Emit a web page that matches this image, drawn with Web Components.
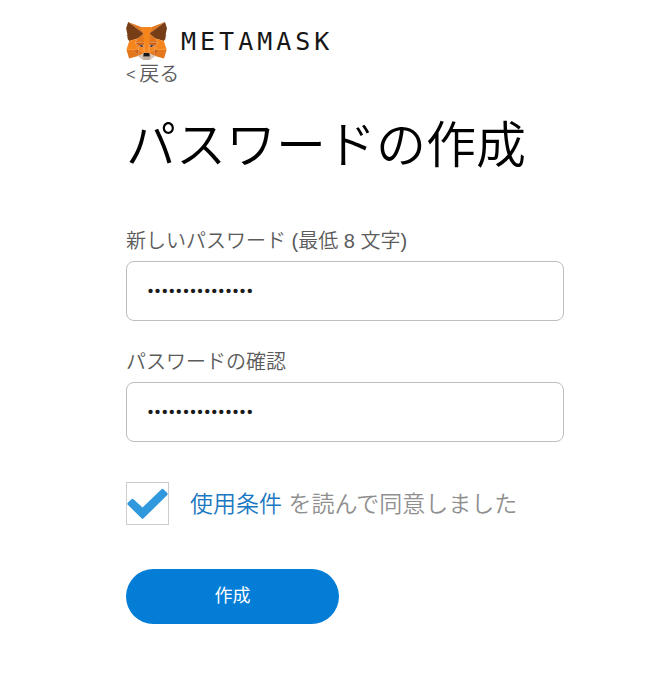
<!DOCTYPE html>
<html lang="ja">
<head>
<meta charset="utf-8">
<meta name="viewport" content="width=device-width, initial-scale=1">
<title>MetaMask</title>
<style>
    body {
        margin: 0;
        background: #fff;
        color: #5b5b5b;
        font-family: "Liberation Sans", "Noto Sans CJK JP", sans-serif;
        font-size: 20px;
        font-weight: 350;
        line-height: 24px;
    }
</style>
</head>
<body>
<create-password></create-password>

<script>
class BrandLogo extends HTMLElement {
    constructor() {
        super();
        this.attachShadow({ mode: 'open' });
        this.shadowRoot.innerHTML = `
        <style>
            :host {
                display: flex;
                align-items: center;
                gap: 14px;
                height: 38px;
                color: #161616;
                font: 25px "DejaVu Sans Mono", monospace;
                letter-spacing: 4px;
            }
            svg {
                flex: none;
                width: 41px;
                height: 38px;
            }
        </style>
        <svg viewBox="31 35 256 237" aria-hidden="true">
            <g fill="#e4761b">
                <path d="M274 35.500 174.600 109.400 193 65.800zM44.400 35.500 143.100 110.100 125.600 65.800z"/>
                <path d="M238.300 206.800 211.800 247.400 268.500 263 284.800 207.700zM33.900 207.700 50.100 263 106.800 247.400 80.300 206.800z"/>
                <path d="M103.600 138.200 87.800 162.100 144.100 164.600 142.100 104.100zM214.900 138.200 175.900 103.400 174.600 164.600 230.800 162.100z"/>
                <path d="M106.800 247.400 140.600 230.900 111.400 208.100zM177.900 230.900 211.800 247.400 207.100 208.100z"/>
            </g>
            <path fill="#d7c1b3" d="M211.800 247.400 177.900 230.900 180.600 253 180.300 262.300zM106.800 247.400 138.300 262.300 138.100 253 140.600 230.900z"/>
            <path fill="#233447" d="M138.800 193.500 110.600 185.200 130.500 176.100zM179.700 193.500 188 176.100 208 185.200z"/>
            <g fill="#cd6116">
                <path d="M106.800 247.400 111.600 206.800 80.300 207.700zM207 206.800 211.800 247.400 238.300 207.700z"/>
                <path d="M230.800 162.100 174.600 164.600 179.800 193.500 188.100 176.100 208.100 185.200zM110.600 185.200 130.600 176.100 138.800 193.500 144.100 164.600 87.800 162.100z"/>
            </g>
            <g fill="#e4751f">
                <path d="M87.800 162.100 111.400 208.100 110.600 185.200zM208.100 185.200 207.100 208.100 230.800 162.100z"/>
                <path d="M144.100 164.600 138.800 193.500 145.400 227.600 146.900 182.700zM174.600 164.600 171.900 182.600 173.100 227.600 179.800 193.500z"/>
            </g>
            <path fill="#f6851b" d="M179.800 193.500 173.100 227.600 177.900 230.900 207.100 208.100 208.100 185.200zM110.600 185.200 111.400 208.100 140.600 230.900 145.400 227.600 138.800 193.500z"/>
            <path fill="#c0ad9e" d="M180.300 262.300 180.600 253 178.100 250.800H140.400L138.100 253 138.300 262.300 106.800 247.400 117.800 256.400 140.100 271.900H178.400L200.800 256.400 211.800 247.400z"/>
            <path fill="#161616" d="M177.900 230.900 173.100 227.600H145.400L140.600 230.900 138.100 253 140.400 250.800H178.100L180.600 253z"/>
            <g fill="#763d16">
                <path d="M278.300 114.200 286.800 73.400 274.100 35.500 177.900 106.900 214.900 138.200 267.200 153.500 278.800 140 273.800 136.400 281.800 129.100 275.600 124.300 283.600 118.200z"/>
                <path d="M31.800 73.400 40.300 114.200 34.900 118.200 42.900 124.300 36.800 129.100 44.800 136.400 39.800 140 51.300 153.500 103.600 138.200 140.600 106.900 44.400 35.500z"/>
            </g>
            <g fill="#f6851b">
                <path d="M267.200 153.500 214.900 138.200 230.800 162.100 207.100 208.100 238.300 207.700H284.800zM103.600 138.200 51.300 153.500 33.900 207.700H80.300L111.400 208.100 87.800 162.100z"/>
                <path d="M174.600 164.600 177.900 106.900 193.100 65.800H125.600L140.600 106.900 144.100 164.600 145.300 182.800 145.400 227.600H173.100L173.300 182.800z"/>
            </g>
        </svg>
        <span>METAMASK</span>
        `;
    }
}

class BackLink extends HTMLElement {
    constructor() {
        super();
        this.attachShadow({ mode: 'open' });
        this.shadowRoot.innerHTML = `
        <style>
            :host {
                display: flex;
            }
            a {
                display: flex;
                gap: 3px;
                color: inherit;
                text-decoration: none;
            }
            span {
                font-family: Roboto, sans-serif;
            }
        </style>
        <a href="#"><span>&lt;</span><slot></slot></a>
        `;
    }
}

class PasswordField extends HTMLElement {
    constructor() {
        super();
        this.attachShadow({ mode: 'open' });
        this.shadowRoot.innerHTML = `
        <style>
            :host {
                display: flex;
                flex-direction: column;
                gap: 8px;
            }
            input {
                box-sizing: border-box;
                width: 100%;
                height: 60px;
                padding: 0 20px;
                border: 1px solid #bbbdc2;
                border-radius: 8px;
                background: #fff;
                color: #1b1b1b;
                font: 400 21px Roboto, sans-serif;
                outline: none;
            }
            input:focus {
                border-color: #037dd6;
            }
        </style>
        <label for="input"><slot></slot></label>
        <input id="input" type="password" autocomplete="new-password">
        `;
    }
    connectedCallback() {
        this.shadowRoot.querySelector('#input').value = this.getAttribute('value') || '';
    }
}

class TermsCheck extends HTMLElement {
    constructor() {
        super();
        this.attachShadow({ mode: 'open' });
        this.shadowRoot.innerHTML = `
        <style>
            :host {
                display: flex;
                align-items: center;
                gap: 21px;
                color: #8f8f8f;
                font-size: 23px;
            }
            .box {
                display: grid;
                flex: none;
                width: 43px;
                height: 43px;
            }
            .box > * {
                grid-area: 1 / 1;
            }
            input {
                appearance: none;
                margin: 0;
                border: 1px solid #cdcdcd;
                background: #fff;
            }
            svg {
                width: 43px;
                height: 43px;
                pointer-events: none;
                visibility: hidden;
            }
            input:checked + svg {
                visibility: visible;
            }
        </style>
        <div class="box">
            <input id="terms" type="checkbox" checked>
            <svg viewBox="0 0 43 43" aria-hidden="true">
                <path d="M1.500 22.500Q1 21.500 2 20.500L5.500 17.200Q6.500 16.400 7.500 17.200L16.500 25.500 35.500 7.300Q36.500 6.300 37.500 7.300L41.300 11Q42 12 41.300 13L17.600 36.300Q16.500 37.300 15.500 36.300z" fill="#3098dc"/>
            </svg>
        </div>
        <label for="terms"><slot></slot></label>
        `;
    }
}

class PrimaryButton extends HTMLElement {
    constructor() {
        super();
        this.attachShadow({ mode: 'open' });
        this.shadowRoot.innerHTML = `
        <style>
            :host {
                display: flex;
            }
            button {
                min-width: 213px;
                height: 55px;
                padding: 0 32px 2px;
                border: 0;
                border-radius: 28px;
                background: #037dd6;
                color: #fff;
                font: inherit;
                font-size: 18px;
                font-weight: 400;
                cursor: pointer;
            }
        </style>
        <button type="button"><slot></slot></button>
        `;
    }
}

class CreatePassword extends HTMLElement {
    constructor() {
        super();
        this.attachShadow({ mode: 'open' });
        this.shadowRoot.innerHTML = `
        <style>
            :host {
                display: block;
                padding: 22px 84px 56px 126px;
            }
            back-link {
                margin-top: 2px;
            }
            h1 {
                margin: 24px 0 47px;
                color: #000;
                font-size: 50px;
                font-weight: 350;
                line-height: 72px;
            }
            form {
                display: flex;
                flex-direction: column;
                gap: 29px;
            }
            terms-check {
                margin-top: 11px;
            }
            terms-check a {
                color: #1a78c2;
                text-decoration: none;
            }
            primary-button {
                margin-top: 15px;
            }
        </style>
        <brand-logo></brand-logo>
        <back-link>戻る</back-link>
        <h1>パスワードの作成</h1>
        <form>
            <password-field value="correct-horse-b">新しいパスワード (最低 8 文字)</password-field>
            <password-field value="correct-horse-b">パスワードの確認</password-field>
            <terms-check><a href="#">使用条件</a> を読んで同意しました</terms-check>
            <primary-button>作成</primary-button>
        </form>
        `;
    }
}

customElements.define('brand-logo', BrandLogo);
customElements.define('back-link', BackLink);
customElements.define('password-field', PasswordField);
customElements.define('terms-check', TermsCheck);
customElements.define('primary-button', PrimaryButton);
customElements.define('create-password', CreatePassword);
</script>
</body>
</html>
